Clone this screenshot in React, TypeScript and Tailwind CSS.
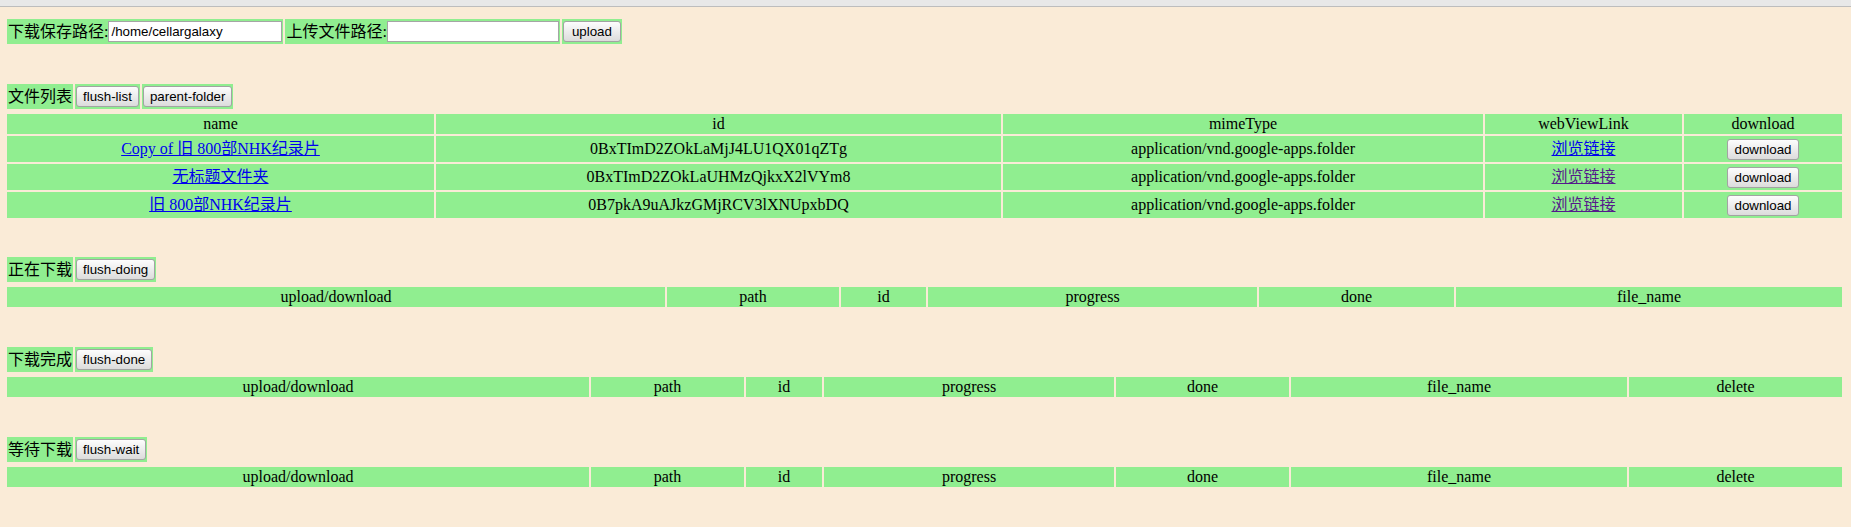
import { ReactNode } from 'react';

const files = [
  {
    name: 'Copy of 旧 800部NHK纪录片',
    id: '0BxTImD2ZOkLaMjJ4LU1QX01qZTg',
    mimeType: 'application/vnd.google-apps.folder',
    visited: false,
  },
  {
    name: '无标题文件夹',
    id: '0BxTImD2ZOkLaUHMzQjkxX2lVYm8',
    mimeType: 'application/vnd.google-apps.folder',
    visited: true,
  },
  {
    name: '旧 800部NHK纪录片',
    id: '0B7pkA9uAJkzGMjRCV3lXNUpxbDQ',
    mimeType: 'application/vnd.google-apps.folder',
    visited: true,
  },
];

function Btn({ children, wide }: { children: ReactNode; wide?: boolean }) {
  return (
    <button
      className={`h-[21px] rounded-[3px] border border-[#a3a3a3] bg-linear-to-b from-[#fdfdfd] to-[#dcdcdc] text-[13.33px] leading-none text-black font-['Liberation_Sans',sans-serif] ${
        wide ? 'px-[8px]' : 'px-[6px]'
      }`}
    >
      {children}
    </button>
  );
}

function Cell({ children }: { children: ReactNode }) {
  return <div className="flex items-center h-[25px] px-[1px] bg-[#90ee90]">{children}</div>;
}

function Toolbar({ label, buttons, className }: { label: string; buttons: string[]; className: string }) {
  return (
    <div className={`flex gap-[2px] pl-[7px] ${className}`}>
      <Cell>{label}</Cell>
      {buttons.map((b) => (
        <Cell key={b}>
          <Btn>{b}</Btn>
        </Cell>
      ))}
    </div>
  );
}

function HeaderTable({ cols, widths }: { cols: string[]; widths: string[] }) {
  return (
    <div className="pl-[5px] pr-[7px] mt-[3px]">
      <table className="w-full table-fixed border-separate border-spacing-[2px]">
        <thead>
          <tr>
            {cols.map((c, i) => (
              <th key={c} className={`h-[20px] p-0 bg-[#90ee90] font-normal text-center leading-[18px] ${widths[i] ?? ''}`}>
                {c}
              </th>
            ))}
          </tr>
        </thead>
      </table>
    </div>
  );
}

export default function App() {
  return (
    <div className="min-h-screen bg-[#faebd7] text-black text-[16px] font-['Liberation_Serif','Noto_Sans_CJK_SC',serif]">
      <div className="h-[7px] bg-[#e8e8e8] border-b border-[#bdbdbd]" />

      <div className="flex gap-[2px] pl-[7px] mt-[12px]">
        <Cell>
          <span>下载保存路径:</span>
          <input
            defaultValue="/home/cellargalaxy"
            className="w-[174px] h-[21px] border border-[#a5a5a5] bg-white px-[2px] text-[13.33px] font-['Liberation_Sans',sans-serif] outline-none"
          />
        </Cell>
        <Cell>
          <span>上传文件路径:</span>
          <input className="w-[172px] h-[21px] border border-[#a5a5a5] bg-white px-[2px] text-[13.33px] font-['Liberation_Sans',sans-serif] outline-none" />
        </Cell>
        <Cell>
          <Btn wide>upload</Btn>
        </Cell>
      </div>

      <Toolbar label="文件列表" buttons={['flush-list', 'parent-folder']} className="mt-[40px]" />
      <div className="pl-[5px] pr-[7px] mt-[3px]">
        <table className="w-full table-fixed border-separate border-spacing-[2px]">
          <thead>
            <tr>
              <th className="w-[427px] h-[20px] p-0 bg-[#90ee90] font-normal leading-[18px]">name</th>
              <th className="w-[565px] p-0 bg-[#90ee90] font-normal leading-[18px]">id</th>
              <th className="w-[480px] p-0 bg-[#90ee90] font-normal leading-[18px]">mimeType</th>
              <th className="w-[197px] p-0 bg-[#90ee90] font-normal leading-[18px]">webViewLink</th>
              <th className="p-0 bg-[#90ee90] font-normal leading-[18px]">download</th>
            </tr>
          </thead>
          <tbody>
            {files.map((f) => (
              <tr key={f.id} className="text-center">
                <td className="h-[26px] p-0 bg-[#90ee90]">
                  <a href="#" className="text-[#0000ee] underline">{f.name}</a>
                </td>
                <td className="p-0 bg-[#90ee90]">{f.id}</td>
                <td className="p-0 bg-[#90ee90]">{f.mimeType}</td>
                <td className="p-0 bg-[#90ee90]">
                  <a href="#" className={`underline ${f.visited ? 'text-[#551a8b]' : 'text-[#0000ee]'}`}>浏览链接</a>
                </td>
                <td className="p-0 pb-[1px] bg-[#90ee90]">
                  <Btn>download</Btn>
                </td>
              </tr>
            ))}
          </tbody>
        </table>
      </div>

      <Toolbar label="正在下载" buttons={['flush-doing']} className="mt-[37px]" />
      <HeaderTable
        cols={['upload/download', 'path', 'id', 'progress', 'done', 'file_name']}
        widths={['w-[658px]', 'w-[172px]', 'w-[85px]', 'w-[329px]', 'w-[195px]']}
      />

      <Toolbar label="下载完成" buttons={['flush-done']} className="mt-[38px]" />
      <HeaderTable
        cols={['upload/download', 'path', 'id', 'progress', 'done', 'file_name', 'delete']}
        widths={['w-[582px]', 'w-[153px]', 'w-[76px]', 'w-[290px]', 'w-[173px]', 'w-[336px]']}
      />

      <Toolbar label="等待下载" buttons={['flush-wait']} className="mt-[38px]" />
      <HeaderTable
        cols={['upload/download', 'path', 'id', 'progress', 'done', 'file_name', 'delete']}
        widths={['w-[582px]', 'w-[153px]', 'w-[76px]', 'w-[290px]', 'w-[173px]', 'w-[336px]']}
      />
    </div>
  );
}
